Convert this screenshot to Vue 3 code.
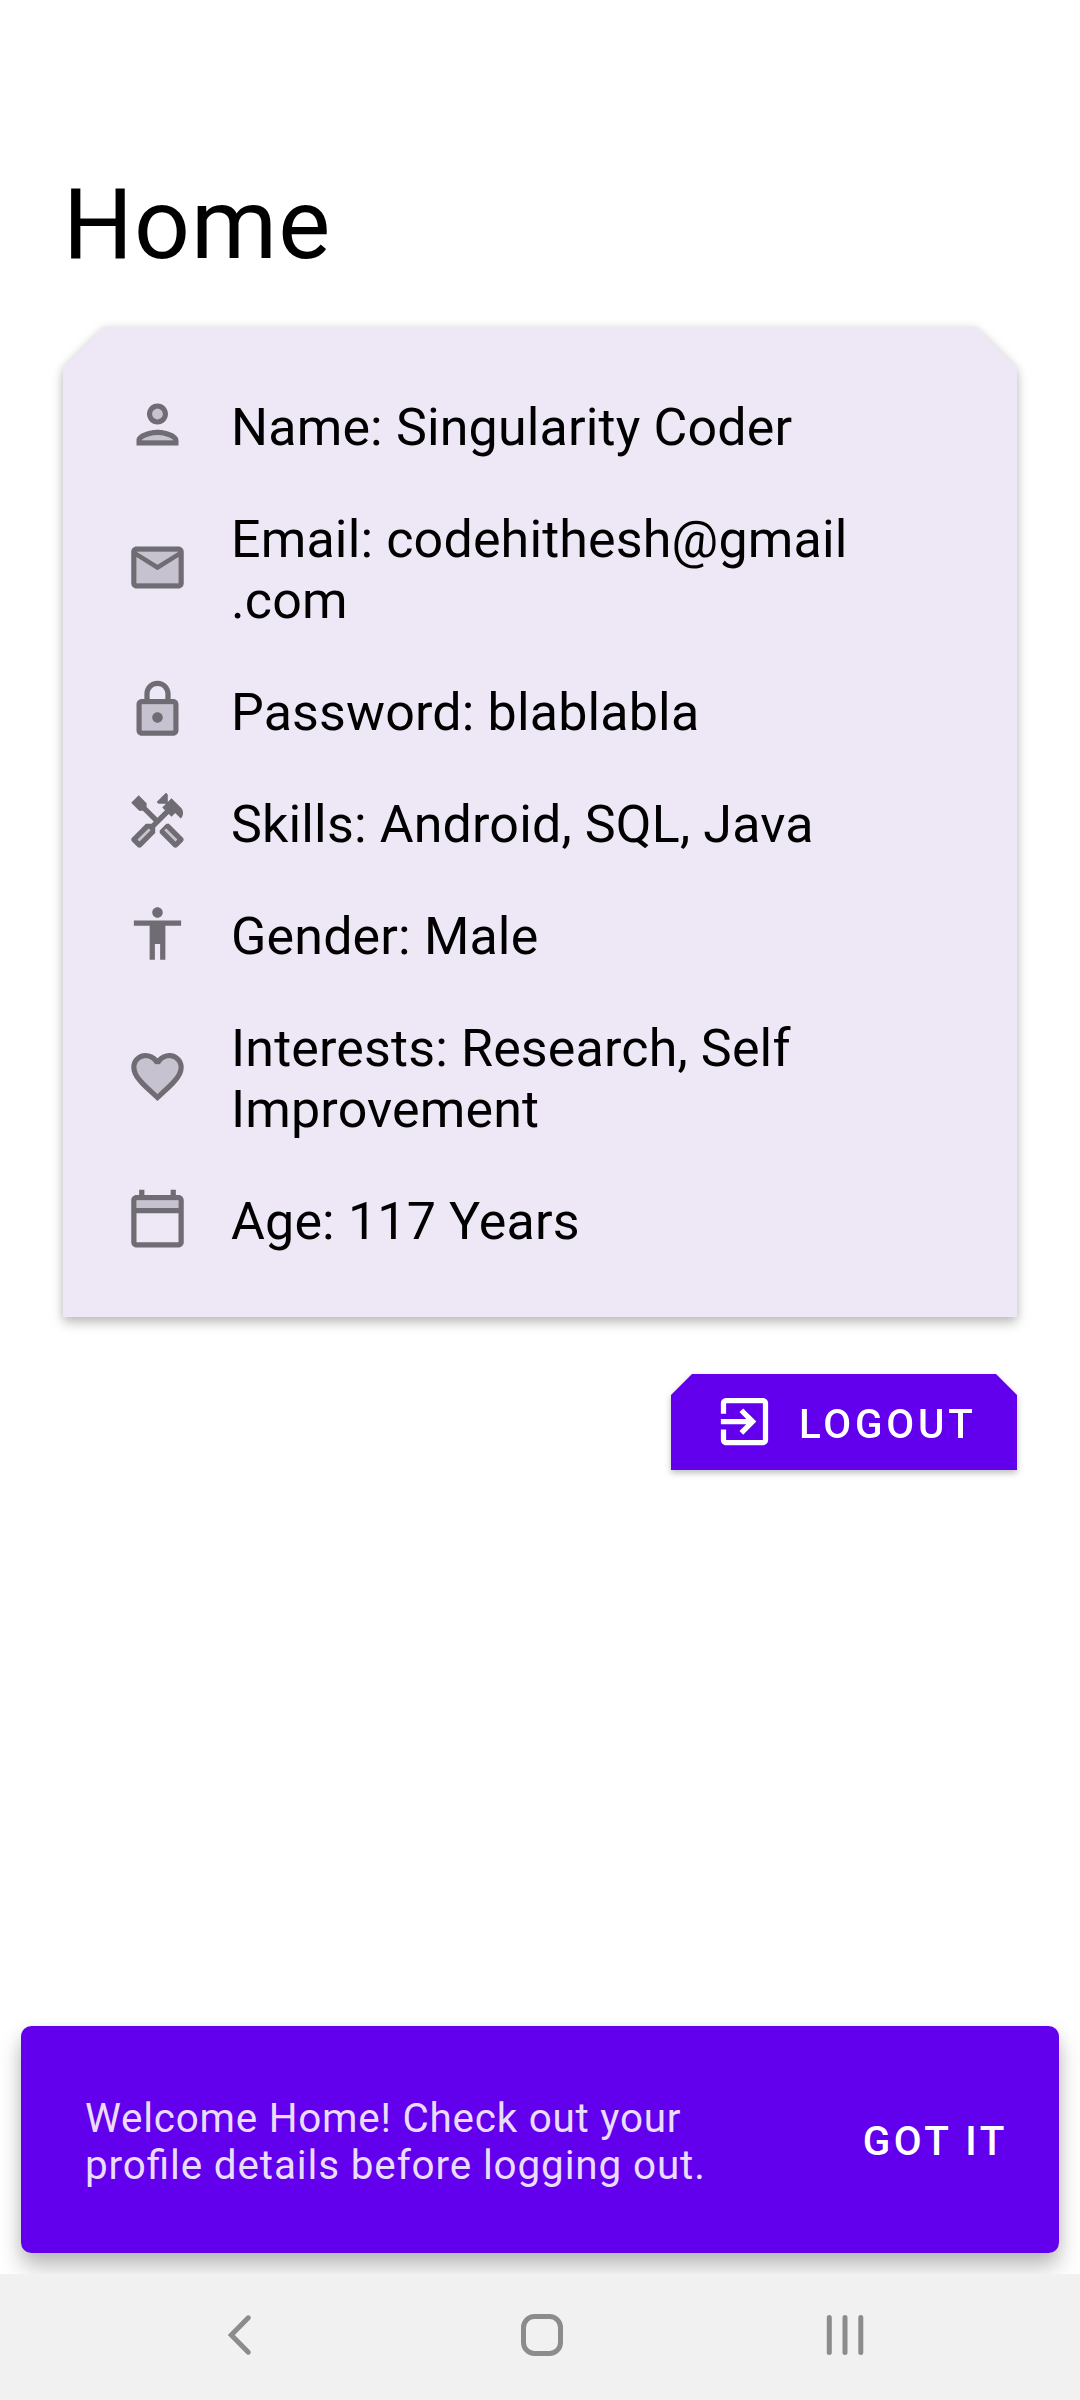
<script setup>
const rows = [
  {
    lines: ['Name: Singularity Coder'],
    tint: 'M12 16c-2.7 0-5.8 1.29-6 2.01V18h12v-.01c-.2-.7-3.3-1.99-6-1.99z M12 6a2 2 0 1 0 0 4a2 2 0 1 0 0-4z',
    path: 'M12 14c-2.67 0-8 1.34-8 4v2h16v-2c0-2.66-5.33-4-8-4zm-6 4c.22-.72 3.31-2 6-2 2.7 0 5.8 1.29 6 2H6zm6-6c2.21 0 4-1.79 4-4s-1.79-4-4-4-4 1.79-4 4 1.79 4 4 4zm0-6c1.1 0 2 .9 2 2s-.9 2-2 2-2-.9-2-2 .9-2 2-2z'
  },
  {
    lines: ['Email: codehithesh@gmail', '.com'],
    tint: 'M4 6h16v12H4z',
    path: 'M4 20h16c1.1 0 2-.9 2-2V6c0-1.1-.9-2-2-2H4c-1.1 0-2 .9-2 2v12c0 1.1.9 2 2 2zM20 6l-8 4.99L4 6h16zM4 8l8 5 8-5v10H4V8z'
  },
  {
    lines: ['Password: blablabla'],
    tint: 'M6 20h12V10H6v10z',
    path: 'M18 8h-1V6c0-2.76-2.24-5-5-5S7 3.24 7 6v2H6c-1.1 0-2 .9-2 2v10c0 1.1.9 2 2 2h12c1.1 0 2-.9 2-2V10c0-1.1-.9-2-2-2zM9 6c0-1.66 1.34-3 3-3s3 1.34 3 3v2H9V6zm9 14H6V10h12v10zm-6-3c1.1 0 2-.9 2-2s-.9-2-2-2-2 .9-2 2 .9 2 2 2z'
  },
  {
    lines: ['Skills: Android, SQL, Java'],
    tint: 'M8.66 14.64l.71.71-4.25 4.24-.71-.71zM15.31 14.64l4.24 4.24-.71.71-4.24-4.24z',
    path: 'M21.67 18.17l-5.3-5.3h-.99l-2.54 2.54v.99l5.3 5.3c.39.39 1.02.39 1.41 0l2.12-2.12c.39-.38.39-1.02 0-1.41zm-2.83 1.42l-4.24-4.24.71-.71 4.24 4.24-.71.71z M17.34 10.19l1.41-1.41 2.12 2.12c1.17-1.17 1.17-3.07 0-4.24l-3.54-3.54-1.41 1.41V1.71L15.22 1l-3.54 3.54.71.71h2.83l-1.41 1.41 1.06 1.06-2.89 2.89-4.13-4.13V5.06L4.83 2.04 2 4.87 5.03 7.9h1.41l4.13 4.13-.85.85H7.6l-5.3 5.3c-.39.39-.39 1.02 0 1.41l2.12 2.12c.39.39 1.02.39 1.41 0l5.3-5.3v-2.12l5.15-5.15 1.06 1.05zM9.36 15.34l-4.24 4.25-.71-.71 4.24-4.24.71.7z'
  },
  {
    lines: ['Gender: Male'],
    tint: '',
    path: 'M12 2c1.1 0 2 .9 2 2s-.9 2-2 2-2-.9-2-2 .9-2 2-2zm9 7h-6v13h-2v-6h-2v6H9V9H3V7h18v2z'
  },
  {
    lines: ['Interests: Research, Self', 'Improvement'],
    tint: 'M16.5 5c-1.54 0-3.04.99-3.56 2.36h-1.87C10.54 5.99 9.04 5 7.5 5 5.5 5 4 6.5 4 8.5c0 2.89 3.14 5.74 7.9 10.05l.1.1.1-.1C16.86 14.24 20 11.39 20 8.5c0-2-1.5-3.5-3.5-3.5z',
    path: 'M16.5 3c-1.74 0-3.41.81-4.5 2.09C10.91 3.81 9.24 3 7.5 3 4.42 3 2 5.42 2 8.5c0 3.78 3.4 6.86 8.55 11.54L12 21.35l1.45-1.32C18.6 15.36 22 12.28 22 8.5 22 5.42 19.58 3 16.5 3zm-4.4 15.55l-.1.1-.1-.1C7.14 14.24 4 11.39 4 8.5 4 6.5 5.5 5 7.5 5c1.54 0 3.04.99 3.57 2.36h1.87C13.46 5.99 14.96 5 16.5 5c2 0 3.5 1.5 3.5 3.5 0 2.89-3.14 5.74-7.9 10.05z'
  },
  {
    lines: ['Age: 117 Years'],
    tint: 'M4 5h16v3H4z',
    path: 'M20 3h-1V1h-2v2H7V1H5v2H4c-1.1 0-2 .9-2 2v16c0 1.1.9 2 2 2h16c1.1 0 2-.9 2-2V5c0-1.1-.9-2-2-2zm0 18H4V10h16v11zm0-13H4V5h16v3z'
  }
]
</script>

<template>
  <div class="screen">
    <main class="content">
      <h1 class="title">Home</h1>
      <div class="card-shadow">
        <ul class="card">
          <li v-for="row in rows" :key="row.lines[0]" class="row">
            <svg class="icon" viewBox="0 0 24 24">
              <path v-if="row.tint" :d="row.tint" opacity=".3" />
              <path :d="row.path" />
            </svg>
            <div class="label">
              <div v-for="line in row.lines" :key="line">{{ line }}</div>
            </div>
          </li>
        </ul>
      </div>
      <div class="button-shadow">
        <button class="logout" type="button">
          <svg class="logout-icon" viewBox="0 0 24 24">
            <path d="M10.09 15.59L11.5 17l5-5-5-5-1.41 1.41L12.67 11H3v2h9.67l-2.58 2.59zM19 3H5c-1.11 0-2 .9-2 2v4h2V5h14v14H5v-4H3v4c0 1.1.89 2 2 2h14c1.1 0 2-.9 2-2V5c0-1.1-.9-2-2-2z" />
          </svg>
          <span>LOGOUT</span>
        </button>
      </div>
    </main>
    <div class="snack-area">
      <div class="snackbar">
        <p class="message">
          <span class="message-line">Welcome Home! Check out your</span>
          <span class="message-line second">profile details before logging out.</span>
        </p>
        <button class="action" type="button">GOT IT</button>
      </div>
    </div>
    <nav class="navbar">
      <svg class="nav-icons" viewBox="0 0 1080 126" fill="none" stroke="#8c8c8c" stroke-width="5">
        <path d="M248.3 43.8L231.3 61L248.3 78.2" stroke-linecap="round" />
        <rect x="523.5" y="42.5" width="37" height="37" rx="11" />
        <path d="M829.3 43.4V78.6M845 43.4V78.6M860.8 43.4V78.6" stroke-linecap="round" />
      </svg>
    </nav>
  </div>
</template>

<style>
body {
  margin: 0;
  background: #fff;
}
</style>

<style scoped>
.screen {
  display: flex;
  flex-direction: column;
  width: 1080px;
  height: 2400px;
  overflow: hidden;
  background: #fff;
  color: #000;
  font-family: Roboto, sans-serif;
}
.content {
  display: flex;
  flex: 1;
  flex-direction: column;
  padding: 167px 63px 0;
}
.title {
  margin: 0 0 45px;
  font-size: 98.2px;
  font-weight: 400;
  line-height: 115px;
  letter-spacing: 1px;
}
.card-shadow {
  filter: drop-shadow(0 6px 6px rgba(0, 0, 0, 0.22)) drop-shadow(0 0 4px rgba(0, 0, 0, 0.1));
}
.card {
  display: flex;
  flex-direction: column;
  gap: 51px;
  box-sizing: border-box;
  height: 990px;
  margin: 0;
  padding: 70px 63px 0;
  background: #ede7f6;
  clip-path: polygon(41px 0, calc(100% - 41px) 0, 100% 41px, 100% 100%, 0 100%, 0 41px);
  list-style: none;
}
.row {
  display: flex;
  align-items: center;
  gap: 42px;
}
.icon {
  width: 63px;
  height: 63px;
  margin: -4px 0 2px;
  fill: #6f6c73;
}
.label {
  font-size: 51.98px;
  line-height: 61px;
  letter-spacing: 0.16px;
  white-space: nowrap;
}
.button-shadow {
  align-self: flex-end;
  margin-top: 57px;
  filter: drop-shadow(0 3px 3px rgba(0, 0, 0, 0.26));
}
.logout {
  display: flex;
  align-items: center;
  box-sizing: border-box;
  width: 346px;
  height: 96px;
  padding: 0 0 0 42px;
  border: 0;
  background: #6200ee;
  clip-path: polygon(21px 0, calc(100% - 21px) 0, 100% 21px, 100% 100%, 0 100%, 0 21px);
  color: #fff;
  font: 500 40.43px/47px Roboto, sans-serif;
  letter-spacing: 3.8px;
}
.logout-icon {
  width: 63px;
  height: 63px;
  margin: -1px 23px 0 0;
  fill: #fff;
}
.logout span {
  padding-top: 5px;
}
.snack-area {
  padding: 0 21px 21px;
}
.snackbar {
  display: flex;
  align-items: center;
  justify-content: space-between;
  box-sizing: border-box;
  height: 227px;
  padding: 0 51px 0 64px;
  border-radius: 10.5px;
  background: #6200ee;
  box-shadow: 0 14px 22px rgba(0, 0, 0, 0.26), 0 2px 14px rgba(0, 0, 0, 0.06);
}
.message {
  display: flex;
  flex-direction: column;
  margin: 4px 0 0;
  color: #ebdcfd;
  font-size: 40.43px;
  font-feature-settings: 'liga' 1;
  line-height: 47px;
  letter-spacing: 0.76px;
  white-space: nowrap;
}
.message-line.second {
  letter-spacing: 0.87px;
}
.action {
  padding: 4px 0 0;
  border: 0;
  background: none;
  color: #fff;
  font: 500 40.43px/47px Roboto, sans-serif;
  letter-spacing: 3.61px;
}
.navbar {
  position: relative;
  height: 126px;
  background: #f1f1f1;
}
.nav-icons {
  display: block;
  width: 1080px;
  height: 126px;
}
</style>
